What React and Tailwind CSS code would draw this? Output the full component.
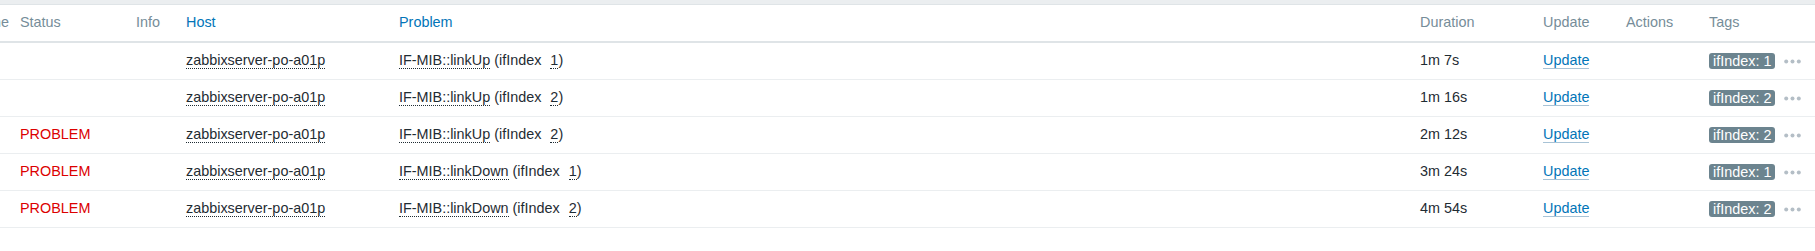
const cols = 'grid grid-cols-[20px_116px_50px_213px_1021px_123px_83px_83px_1fr] items-center';

const rows = [
  { status: '', trap: 'linkUp', idx: '1', duration: '1m 7s' },
  { status: '', trap: 'linkUp', idx: '2', duration: '1m 16s' },
  { status: 'PROBLEM', trap: 'linkUp', idx: '2', duration: '2m 12s' },
  { status: 'PROBLEM', trap: 'linkDown', idx: '1', duration: '3m 24s' },
  { status: 'PROBLEM', trap: 'linkDown', idx: '2', duration: '4m 54s' },
];

function Dots() {
  return (
    <svg width="17" height="5" viewBox="0 0 17 5" className="ml-[9px]">
      <circle cx="2.2" cy="2.5" r="2" fill="#b4bec6" />
      <circle cx="8.5" cy="2.5" r="2" fill="#b4bec6" />
      <circle cx="14.8" cy="2.5" r="2" fill="#b4bec6" />
    </svg>
  );
}

function Row({ row }) {
  return (
    <div className={`${cols} h-[37px] border-b border-[#ebeef0] text-[#1f2c33]`}>
      <div />
      <div className="text-[#dc0000]">{row.status}</div>
      <div />
      <div>
        <span className="border-b border-dotted border-[#1f2c33]">zabbixserver-po-a01p</span>
      </div>
      <div className="whitespace-pre">
        <span className="border-b border-dotted border-[#1f2c33]">IF-MIB::{row.trap}</span>
        {' (ifIndex  '}
        <span className="ml-[1px] border-b border-dotted border-[#1f2c33]">{row.idx}</span>
        {')'}
      </div>
      <div>{row.duration}</div>
      <div>
        <span className="text-[#0275b8] border-b border-[#a8c3d6]">Update</span>
      </div>
      <div />
      <div className="flex items-center">
        <span className="bg-[#6c848f] text-white rounded-[3px] px-[4px] leading-[16px]">ifIndex: {row.idx}</span>
        <Dots />
      </div>
    </div>
  );
}

export default function App() {
  return (
    <div className="w-[1815px] h-[251px] bg-white overflow-hidden text-[14.4px] font-['Liberation_Sans',Arial,sans-serif]">
      <div className="h-[5px] bg-[#ebeef0] border-b border-[#dfe4e7]" />
      <div className={`${cols} h-[38px] border-b-2 border-[#dfe4e7] text-[#768d99]`}>
        <div className="flex justify-end overflow-hidden pr-[11px] whitespace-nowrap">Time</div>
        <div>Status</div>
        <div>Info</div>
        <div className="text-[#0275b8]">Host</div>
        <div className="text-[#0275b8]">Problem</div>
        <div>Duration</div>
        <div>Update</div>
        <div>Actions</div>
        <div>Tags</div>
      </div>
      {rows.map((row, i) => (
        <Row key={i} row={row} />
      ))}
    </div>
  );
}
